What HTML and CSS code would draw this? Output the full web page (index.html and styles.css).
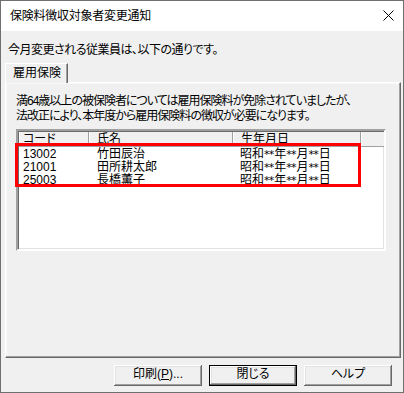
FILE: index.html
```html
<!DOCTYPE html>
<html lang="ja">
<head>
<meta charset="utf-8">
<title>保険料徴収対象者変更通知</title>
<link rel="stylesheet" href="styles.css">
</head>
<body>
<div class="window">
  <div class="titlebar">
    <span class="title">保険料徴収対象者変更通知</span>
    <svg class="close" width="11" height="11" viewBox="0 0 11 11"><path d="M0.5 0.5 L10.5 10.5 M10.5 0.5 L0.5 10.5" stroke="#000" stroke-width="1" fill="none"/></svg>
  </div>
  <div class="client">
    <p class="intro">今月変更される従業員は、以下の通りです。</p>
    <div class="tabs"><div class="tab">雇用保険</div></div>
    <div class="panel">
      <p class="desc">満64歳以上の被保険者については雇用保険料が免除されていましたが、<br>法改正により、本年度から雇用保険料の徴収が必要になります。</p>
      <div class="list">
        <div class="list-head">
          <div class="hcell c-code">コード</div>
          <div class="hcell c-name">氏名</div>
          <div class="hcell c-date">生年月日</div>
          <div class="hcell c-fill"></div>
        </div>
        <div class="row"><span class="c-code">13002</span><span class="c-name">竹田辰治</span><span class="c-date">昭和<span class="ast">**</span>年<span class="ast">**</span>月<span class="ast">**</span>日</span></div>
        <div class="row"><span class="c-code">21001</span><span class="c-name">田所耕太郎</span><span class="c-date">昭和<span class="ast">**</span>年<span class="ast">**</span>月<span class="ast">**</span>日</span></div>
        <div class="row"><span class="c-code">25003</span><span class="c-name">長橋薫子</span><span class="c-date">昭和<span class="ast">**</span>年<span class="ast">**</span>月<span class="ast">**</span>日</span></div>
        <div class="highlight"></div>
      </div>
    </div>
    <div class="buttons">
      <div class="btn">印刷(<u>P</u>)...</div>
      <div class="btn default">閉じる</div>
      <div class="btn">ヘルプ</div>
    </div>
  </div>
</div>
</body>
</html>
```
FILE: styles.css
```css
* { box-sizing: border-box; }
html, body { margin: 0; padding: 0; }
body {
  width: 404px;
  height: 393px;
  font-family: "Liberation Sans", "Noto Sans CJK JP", sans-serif;
  font-size: 12px;
  font-feature-settings: "palt";
  color: #000;
  background: #fff;
}
.window {
  width: 404px;
  height: 393px;
  border: 1px solid #707070;
  display: flex;
  flex-direction: column;
}
.titlebar {
  height: 30px;
  background: #fff;
  display: flex;
  align-items: center;
  justify-content: space-between;
  padding: 0 9px 0 9px;
}
.title { line-height: 14px; margin-top: -1px; letter-spacing: -0.25px; }
.close { display: block; margin-top: -1px; }
.client {
  flex: 1;
  background: #f0f0f0;
  display: flex;
  flex-direction: column;
}
.intro {
  margin: 12px 0 0 7px;
  line-height: 14px;
  letter-spacing: -0.5px;
}
.tabs {
  margin-top: 6px;
  display: flex;
  padding-left: 4px;
  position: relative;
  z-index: 1;
  margin-bottom: -1px;
}
.tab {
  width: 63px;
  height: 20px;
  padding: 2px 0 0 7px;
  line-height: 14px;
  background: #f0f0f0;
  border-top: 1px solid #fff;
  border-left: 1px solid #fff;
  border-right: 1px solid #696969;
  box-shadow: inset -1px 0 #a0a0a0;
}
.panel {
  margin: 0 2px 0 4px;
  height: 276px;
  border: 1px solid;
  border-color: #fff #696969 #696969 #fff;
  box-shadow: inset -1px -1px #a0a0a0, inset 1px 1px #f8f8f8;
  padding: 11px 0 0 10px;
}
.desc {
  margin: 0;
  line-height: 15px;
  letter-spacing: -1px;
}
.list {
  position: relative;
  margin-top: 5px;
  width: 370px;
  height: 122px;
  background: #fff;
  border: 2px solid;
  border-color: #a0a0a0 #fff #fff #a0a0a0;
  box-shadow: inset 1px 1px #696969, inset -1px -1px #e3e3e3;
  padding: 1px 0 0 1px;
}
.list-head {
  display: flex;
  height: 15px;
  background: #f0f0f0;
  border-bottom: 1px solid #a0a0a0;
}
.hcell {
  line-height: 14px;
  border-right: 1px solid #a0a0a0;
  box-shadow: inset 1px 0 #fff;
  padding-left: 8px;
}
.hcell.c-code { padding-left: 4px; }
.c-code { width: 70px; }
.c-name { width: 144px; }
.c-date { width: 128px; }
.hcell.c-fill { flex: 1; border-right: none; }
.row {
  display: flex;
  height: 13px;
  line-height: 13px;
}
.list-head + .row { margin-top: 1px; }
.row .c-code { padding-left: 4px; }
.row .c-name { padding-left: 8px; }
.row .c-date { padding-left: 7px; }
.ast {
  font-family: "DejaVu Sans", sans-serif;
  font-size: 11px;
  letter-spacing: -0.8px;
  margin-right: 0.8px;
}
.highlight {
  position: absolute;
  left: -3px;
  top: 12px;
  width: 346px;
  height: 44px;
  border: 3px solid #ff0000;
}
.buttons {
  display: flex;
  justify-content: flex-end;
  gap: 7px;
  margin-top: 7px;
  padding-right: 11px;
}
.btn {
  width: 88px;
  height: 21px;
  line-height: 19px;
  text-align: center;
  background: #f0f0f0;
  box-shadow: inset -1px -1px #696969, inset 1px 1px #fff, inset -2px -2px #a0a0a0, inset 2px 2px #e3e3e3;
}
.btn.default {
  border: 1px solid #000;
  line-height: 17px;
}
.btn u { text-decoration-thickness: 1px; text-underline-offset: 1px; }
```
